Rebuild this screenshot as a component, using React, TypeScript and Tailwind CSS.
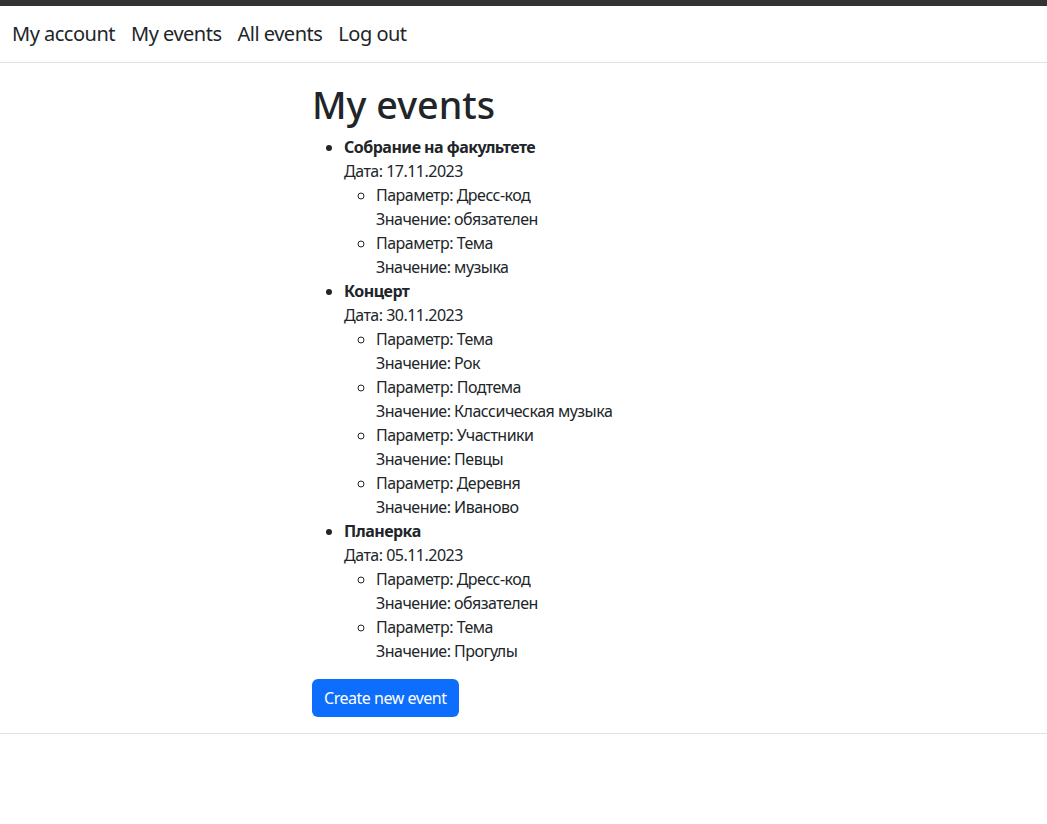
import React from "react";

type EventItem = {
  name: string;
  date: string;
  params: { key: string; value: string }[];
};

const events: EventItem[] = [
  {
    name: "Собрание на факультете",
    date: "17.11.2023",
    params: [
      { key: "Дресс-код", value: "обязателен" },
      { key: "Тема", value: "музыка" },
    ],
  },
  {
    name: "Концерт",
    date: "30.11.2023",
    params: [
      { key: "Тема", value: "Рок" },
      { key: "Подтема", value: "Классическая музыка" },
      { key: "Участники", value: "Певцы" },
      { key: "Деревня", value: "Иваново" },
    ],
  },
  {
    name: "Планерка",
    date: "05.11.2023",
    params: [
      { key: "Дресс-код", value: "обязателен" },
      { key: "Тема", value: "Прогулы" },
    ],
  },
];

const App = () => {
  return (
    <div className="min-h-[824px] bg-white font-['Noto_Sans',sans-serif] text-[#212529]">
      <div className="h-[6px] bg-[#333333]" />
      <nav className="flex h-[57px] items-center gap-4 border-b border-[#dee2e6] px-3 text-[20px] tracking-[-0.025em]">
        <a href="#">My account</a>
        <a href="#">My events</a>
        <a href="#">All events</a>
        <a href="#">Log out</a>
      </nav>
      <main className="ml-[312px] pb-4">
        <h1 className="mt-[19px] mb-2 text-[37.7px] leading-[1.2] font-medium">My events</h1>
        <ul className="mb-4 list-disc pl-8 text-base leading-6 tracking-[-0.032em]">
          {events.map((ev) => (
            <li key={ev.name}>
              <b className="font-bold">{ev.name}</b>
              <br />
              Дата: {ev.date}
              <ul className="list-[circle] pl-8">
                {ev.params.map((p) => (
                  <li key={p.key}>
                    Параметр: {p.key}
                    <br />
                    Значение: {p.value}
                  </li>
                ))}
              </ul>
            </li>
          ))}
        </ul>
        <button className="h-[38px] rounded-md bg-[#0d6efd] px-3 text-base tracking-[-0.03em] text-white">
          Create new event
        </button>
      </main>
      <div className="border-t border-[#dee2e6]" />
    </div>
  );
};

export default App;
